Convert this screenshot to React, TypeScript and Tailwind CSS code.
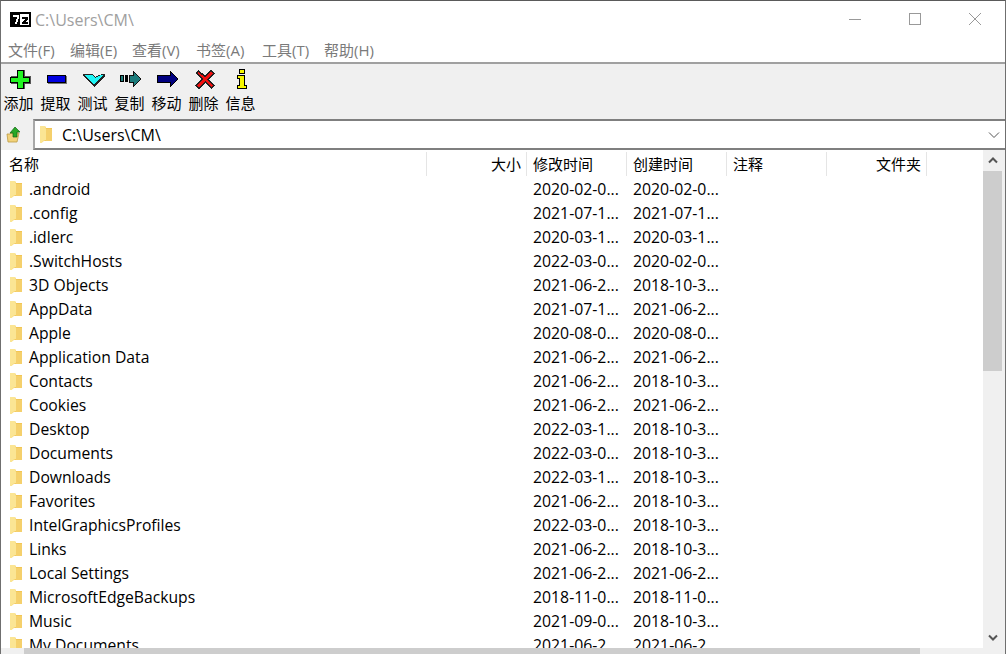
const menus = [
  { label: '文件(F)', width: 'w-[62px]' },
  { label: '编辑(E)', width: 'w-[62px]' },
  { label: '查看(V)', width: 'w-[64px]' },
  { label: '书签(A)', width: 'w-[66px]' },
  { label: '工具(T)', width: 'w-[62px]' },
  { label: '帮助(H)', width: 'w-[62px]' },
]

const files = [
  ['.android', '2020-02-0...', '2020-02-0...'],
  ['.config', '2021-07-1...', '2021-07-1...'],
  ['.idlerc', '2020-03-1...', '2020-03-1...'],
  ['.SwitchHosts', '2022-03-0...', '2020-02-0...'],
  ['3D Objects', '2021-06-2...', '2018-10-3...'],
  ['AppData', '2021-07-1...', '2021-06-2...'],
  ['Apple', '2020-08-0...', '2020-08-0...'],
  ['Application Data', '2021-06-2...', '2021-06-2...'],
  ['Contacts', '2021-06-2...', '2018-10-3...'],
  ['Cookies', '2021-06-2...', '2021-06-2...'],
  ['Desktop', '2022-03-1...', '2018-10-3...'],
  ['Documents', '2022-03-0...', '2018-10-3...'],
  ['Downloads', '2022-03-1...', '2018-10-3...'],
  ['Favorites', '2021-06-2...', '2018-10-3...'],
  ['IntelGraphicsProfiles', '2022-03-0...', '2018-10-3...'],
  ['Links', '2021-06-2...', '2018-10-3...'],
  ['Local Settings', '2021-06-2...', '2021-06-2...'],
  ['MicrosoftEdgeBackups', '2018-11-0...', '2018-11-0...'],
  ['Music', '2021-09-0...', '2018-10-3...'],
  ['My Documents', '2021-06-2...', '2021-06-2...'],
]

const font = "font-['Open_Sans','Noto_Sans_CJK_SC',sans-serif]"

function FolderIcon() {
  return (
    <svg width="12" height="17" viewBox="0 0 12 17" className="shrink-0">
      <path d="M0 0h5l1 2h6v13H4l-4 2z" fill="#f2c655" />
      <path d="M6 3h6v12H6z" fill="#f5d06c" />
      <path d="M0 0h5l1 3v11l-3 1-1 2H0z" fill="#fbe594" />
    </svg>
  )
}

function ToolIcon({ children }: { children: React.ReactNode }) {
  return (
    <svg width="24" height="22" viewBox="0 0 24 22" shapeRendering="crispEdges">
      {children}
    </svg>
  )
}

const tools: { label: string; icon: React.ReactNode }[] = [
  {
    label: '添加',
    icon: (
      <ToolIcon>
        <path d="M10 3h8v6h6v8h-6v5h-8v-5H4V9h6z" fill="#555" transform="translate(-1 -1)" />
        <path d="M9 2h7v7h6v6h-6v6H9v-6H2V9h7z" fill="#000" />
        <path d="M10 3h5v7h6v4h-6v6h-5v-6H3v-4h7z" fill="#22f522" />
      </ToolIcon>
    ),
  },
  {
    label: '提取',
    icon: (
      <ToolIcon>
        <path d="M3 8h19v8H3z" fill="#777" />
        <path d="M2 7h19v8H2z" fill="#000" />
        <path d="M3 8h17v6H3z" fill="#0000e0" />
      </ToolIcon>
    ),
  },
  {
    label: '测试',
    icon: (
      <ToolIcon>
        <path d="M1 6h9l3 3 7-3h3v2L12 19 1 8z" fill="#222" />
        <path d="M3 7h7l3 3 6-3h2l-9 10z" fill="#1ff5f5" />
      </ToolIcon>
    ),
  },
  {
    label: '复制',
    icon: (
      <ToolIcon>
        <path d="M1 7h4v7H1zM6 7h3v7H6z" fill="#000" />
        <path d="M2 8h2v5H2z" fill="#1c7c7c" />
        <path d="M10 7h4V3l9 8-9 8v-4h-4z" fill="#111" />
        <path d="M11 8h4V5l6 6-6 6v-3h-4z" fill="#1c7c7c" />
      </ToolIcon>
    ),
  },
  {
    label: '移动',
    icon: (
      <ToolIcon>
        <path d="M1 7h13V3l9 8-9 8v-4H1z" fill="#000" />
        <path d="M2 8h13V5l6 6-6 6v-3H2z" fill="#000080" />
      </ToolIcon>
    ),
  },
  {
    label: '删除',
    icon: (
      <ToolIcon>
        <path d="M5 2l7 5 6-5 4 3-6 6 6 7-4 3-6-6-6 6-4-3 6-7-6-6z" fill="#222" />
        <path d="M5 4l7 5 6-5 2 1-6 6 6 7-2 1-6-6-6 6-2-1 6-7-6-6z" fill="#f01010" />
      </ToolIcon>
    ),
  },
  {
    label: '信息',
    icon: (
      <ToolIcon>
        <path d="M9 1h6v5H9zM7 7h8v10h2v4H7v-4h2v-6H7z" fill="#000" />
        <path d="M10 2h4v3h-4zM8 8h6v10h2v2H8v-2h2v-8H8z" fill="#f7f700" />
      </ToolIcon>
    ),
  },
]

const columns = [
  { label: '名称', width: 'w-[426px]', align: 'pl-[8px] text-left' },
  { label: '大小', width: 'w-[100px]', align: 'pr-[5px] text-right' },
  { label: '修改时间', width: 'w-[100px]', align: 'pl-[6px] text-left' },
  { label: '创建时间', width: 'w-[100px]', align: 'pl-[6px] text-left' },
  { label: '注释', width: 'w-[100px]', align: 'pl-[6px] text-left' },
  { label: '文件夹', width: 'w-[100px]', align: 'pr-[5px] text-right' },
]

export default function App() {
  return (
    <div className={`${font} flex h-[654px] w-[1006px] flex-col overflow-hidden border-x border-t border-x-[#6f6f6f] border-t-[#5a5a5a] bg-white text-[15px] leading-5 text-black`}>
      {/* title bar */}
      <div className="flex h-[37px] shrink-0 items-center pl-[9px]">
        <svg width="21" height="15" viewBox="0 0 21 15" shapeRendering="crispEdges">
          <rect width="21" height="15" fill="#000" />
          <rect x="2" y="2" width="17" height="11" fill="#fff" />
          <rect x="2" y="2" width="8" height="11" fill="#000" />
          <path d="M3 3h6v2l-2 7H5l2-7H3z" fill="#fff" />
          <path d="M12 5h6v2l-3 3h3v2h-6v-2l3-3h-3z" fill="#000" />
        </svg>
        <span className="ml-[4px] text-[16px] text-[#a0a0a0]">C:\Users\CM\</span>
        <div className="ml-auto flex items-center">
          <svg width="14" height="14" viewBox="0 0 14 14" className="mr-[46px] mb-[1px]">
            <path d="M1 7.5h12" stroke="#999" />
          </svg>
          <svg width="14" height="14" viewBox="0 0 14 14" className="mr-[46px] mb-[1px]">
            <rect x="1.5" y="1.5" width="11" height="11" fill="none" stroke="#999" />
          </svg>
          <svg width="14" height="14" viewBox="0 0 14 14" className="mr-[23px] mb-[1px]">
            <path d="M1 1l12 12M13 1L1 13" stroke="#999" />
          </svg>
        </div>
      </div>

      {/* menu */}
      <div className="flex h-[26px] shrink-0 items-center border-b-2 border-b-[#a0a0a0] pb-[1px] pl-[7px] text-[#7a7a7a]">
        {menus.map((m) => (
          <span key={m.label} className={`${m.width} shrink-0 whitespace-nowrap`}>{m.label}</span>
        ))}
      </div>

      {/* toolbar */}
      <div className="flex h-[55px] shrink-0 bg-[#f0f0f0] pt-[4px]">
        {tools.map((t) => (
          <div key={t.label} className="flex w-[37px] flex-col items-center">
            {t.icon}
            <span className="mr-[2px] mt-[3px] whitespace-nowrap">{t.label}</span>
          </div>
        ))}
      </div>

      {/* address bar */}
      <div className="flex h-[31px] shrink-0 bg-[#f0f0f0]">
        <div className="flex w-[32px] items-center justify-center pr-[7px]">
          <svg width="15" height="17" viewBox="0 0 15 17">
            <path d="M1 8h3l1-1h8l-2 9H2z" fill="#f2d27a" stroke="#bb9a44" strokeWidth="0.8" />
            <path d="M9 1l5 5h-3v5H7V7H4z" fill="#27a827" stroke="#126612" strokeWidth="0.7" />
          </svg>
        </div>
        <div className="flex flex-1 items-center border-y-2 border-l-2 border-y-[#7f7f7f] border-l-[#a8a8a8] bg-white pl-[5px] pr-[5px]">
          <FolderIcon />
          <span className="ml-[10px] text-[16px]">C:\Users\CM\</span>
          <svg width="12" height="8" viewBox="0 0 12 8" className="ml-auto">
            <path d="M1 1.5l5 5 5-5" fill="none" stroke="#555" />
          </svg>
        </div>
      </div>

      {/* file list */}
      <div className="flex min-h-0 flex-1">
        <div className="flex min-w-0 flex-1 flex-col overflow-hidden">
          <div className="flex h-[27px] shrink-0 items-start pt-[2px]">
            {columns.map((c) => (
              <div key={c.label} className={`${c.width} ${c.align} h-[24px] shrink-0 border-r border-r-[#e5e5e5] leading-[24px]`}>
                {c.label}
              </div>
            ))}
          </div>
          {files.map(([name, modified, created]) => (
            <div key={name} className="flex h-[24px] shrink-0 items-center">
              <div className="flex w-[426px] shrink-0 items-center pl-[9px]">
                <FolderIcon />
                <span className="ml-[7px] text-[15.7px]">{name}</span>
              </div>
              <div className="w-[100px] shrink-0" />
              <div className="w-[100px] shrink-0 pl-[6px] text-[15.8px]">{modified}</div>
              <div className="w-[100px] shrink-0 pl-[6px] text-[15.8px]">{created}</div>
            </div>
          ))}
        </div>

        <div className="flex w-[22px] shrink-0 flex-col bg-[#f0f0f0]">
          <div className="flex h-[21px] w-[19px] shrink-0 items-center justify-center">
            <svg width="10" height="7" viewBox="0 0 10 7">
              <path d="M1 5.5l4-4 4 4" fill="none" stroke="#555" strokeWidth="2" />
            </svg>
          </div>
          <div className="h-[200px] w-[19px] shrink-0 bg-[#cdcdcd]" />
          <div className="mt-auto flex h-[21px] w-[19px] shrink-0 items-center justify-center">
            <svg width="10" height="7" viewBox="0 0 10 7">
              <path d="M1 1.5l4 4 4-4" fill="none" stroke="#555" strokeWidth="2" />
            </svg>
          </div>
        </div>
      </div>

      {/* bottom scrollbar */}
      <div className="flex h-[6px] shrink-0 bg-[#f0f0f0] pl-[23px]">
        <div className="h-full w-[896px] bg-[#cdcdcd]" />
      </div>
    </div>
  )
}
